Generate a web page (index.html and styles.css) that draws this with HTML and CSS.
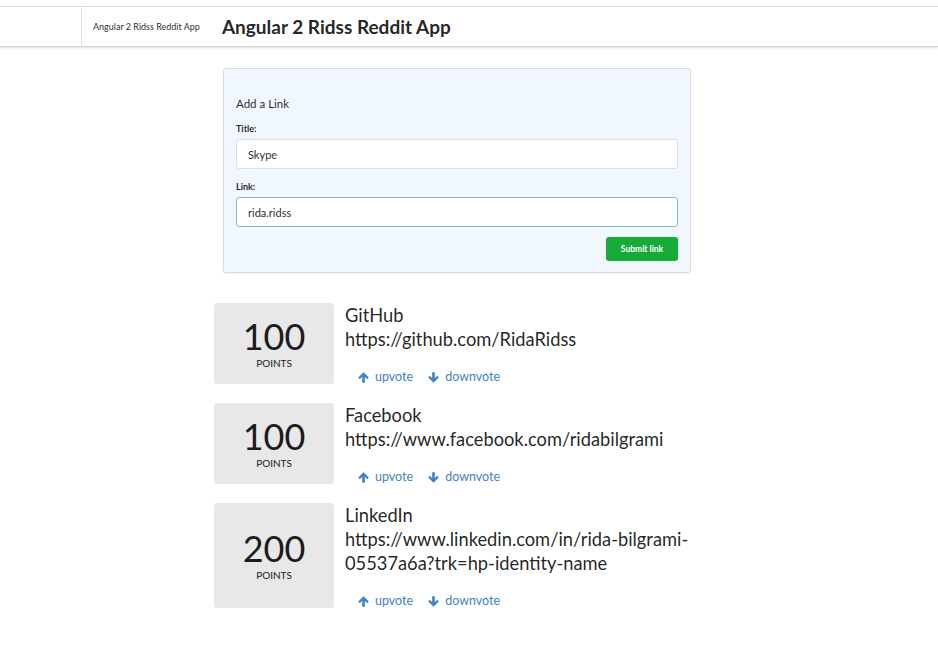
FILE: index.html
```html
<!DOCTYPE html>
<html>
<head>
<meta charset="utf-8">
<link rel="stylesheet" href="styles.css">
</head>
<body>
<div class="menu">
  <div class="menu-spacer"></div>
  <div class="menu-item">Angular 2 Ridss Reddit App</div>
  <h1 class="menu-title">Angular 2 Ridss Reddit App</h1>
</div>
<main class="main">
  <form class="link-form">
    <h3 class="form-heading">Add a Link</h3>
    <div class="field">
      <label class="field-label">Title:</label>
      <input class="field-input" type="text" value="Skype">
    </div>
    <div class="field">
      <label class="field-label">Link:</label>
      <input class="field-input focused" type="text" value="rida.ridss">
    </div>
    <div class="form-actions">
      <button class="submit-btn" type="button">Submit link</button>
    </div>
  </form>

  <div class="articles">
    <div class="article">
      <div class="score"><div class="score-value">100</div><div class="score-label">POINTS</div></div>
      <div class="article-body">
        <div class="article-title">GitHub</div>
        <div class="article-url">https://github.com/RidaRidss</div>
        <div class="votes">
          <a class="vote"><svg class="arrow" viewBox="0 0 10 10"><path d="M5 0.2 L9.8 5 L8.3 6.5 L6.2 4.4 L6.2 9.8 L3.8 9.8 L3.8 4.4 L1.7 6.5 L0.2 5 Z"/></svg>upvote</a>
          <a class="vote"><svg class="arrow" viewBox="0 0 10 10"><path d="M5 9.8 L9.8 5 L8.3 3.5 L6.2 5.6 L6.2 0.2 L3.8 0.2 L3.8 5.6 L1.7 3.5 L0.2 5 Z"/></svg>downvote</a>
        </div>
      </div>
    </div>
    <div class="article">
      <div class="score"><div class="score-value">100</div><div class="score-label">POINTS</div></div>
      <div class="article-body">
        <div class="article-title">Facebook</div>
        <div class="article-url">https://www.facebook.com/ridabilgrami</div>
        <div class="votes">
          <a class="vote"><svg class="arrow" viewBox="0 0 10 10"><path d="M5 0.2 L9.8 5 L8.3 6.5 L6.2 4.4 L6.2 9.8 L3.8 9.8 L3.8 4.4 L1.7 6.5 L0.2 5 Z"/></svg>upvote</a>
          <a class="vote"><svg class="arrow" viewBox="0 0 10 10"><path d="M5 9.8 L9.8 5 L8.3 3.5 L6.2 5.6 L6.2 0.2 L3.8 0.2 L3.8 5.6 L1.7 3.5 L0.2 5 Z"/></svg>downvote</a>
        </div>
      </div>
    </div>
    <div class="article">
      <div class="score"><div class="score-value">200</div><div class="score-label">POINTS</div></div>
      <div class="article-body">
        <div class="article-title">LinkedIn</div>
        <div class="article-url">https://www.linkedin.com/in/rida-bilgrami-05537a6a?trk=hp-identity-name</div>
        <div class="votes">
          <a class="vote"><svg class="arrow" viewBox="0 0 10 10"><path d="M5 0.2 L9.8 5 L8.3 6.5 L6.2 4.4 L6.2 9.8 L3.8 9.8 L3.8 4.4 L1.7 6.5 L0.2 5 Z"/></svg>upvote</a>
          <a class="vote"><svg class="arrow" viewBox="0 0 10 10"><path d="M5 9.8 L9.8 5 L8.3 3.5 L6.2 5.6 L6.2 0.2 L3.8 0.2 L3.8 5.6 L1.7 3.5 L0.2 5 Z"/></svg>downvote</a>
        </div>
      </div>
    </div>
  </div>
</main>
</body>
</html>
```
FILE: styles.css
```css
* { box-sizing: border-box; }
html, body { margin: 0; padding: 0; background: #fff; }
body {
  font-family: Lato, "Helvetica Neue", Arial, sans-serif;
  color: rgba(0,0,0,0.87);
  padding-top: 6px;
}
.menu {
  display: flex;
  align-items: center;
  height: 41px;
  border-top: 1px solid #dcdcdc;
  border-bottom: 1px solid #d4d4d5;
  box-shadow: 0 1px 2px rgba(34,36,38,0.15);
}
.menu-spacer {
  width: 82px;
  align-self: stretch;
  border-right: 1px solid #e2e2e3;
}
.menu-item {
  font-size: 9px;
  padding: 0 22px 0 11px;
  color: rgba(0,0,0,0.87);
}
.menu-title {
  margin: 0;
  font-size: 19px;
  font-weight: 700;
  color: rgba(0,0,0,0.87);
}
.main {
  padding-top: 21px;
}
.link-form {
  margin: 0 0 0 223px;
  width: 468px;
  background: #f0f7fe;
  border: 1px solid #d3dbe3;
  border-radius: 3px;
  box-shadow: 0 1px 2px rgba(0,0,0,0.06);
  padding: 28px 12px 11px 12px;
}
.form-heading {
  margin: 0 0 13px 0;
  font-size: 11.5px;
  font-weight: 400;
  color: rgba(0,0,0,0.87);
}
.field { margin-bottom: 12px; }
.field-label {
  display: block;
  font-size: 9px;
  font-weight: 700;
  margin-bottom: 5px;
  color: rgba(0,0,0,0.87);
}
.field-input {
  display: block;
  width: 100%;
  height: 30px;
  font-family: Lato, sans-serif;
  font-size: 11px;
  color: rgba(0,0,0,0.87);
  background: #fff;
  border: 1px solid #dedede;
  border-radius: 3px;
  padding: 0 11px;
  outline: none;
}
.field-input.focused { border-color: #85b7d9; }
.form-actions {
  display: flex;
  justify-content: flex-end;
  margin-top: -2px;
}
.submit-btn {
  background: #16ab39;
  color: #fff;
  border: none;
  border-radius: 3px;
  width: 72px;
  height: 24px;
  font-family: Lato, sans-serif;
  font-size: 8.5px;
  font-weight: 700;
}
.articles {
  margin: 30px 0 0 214px;
  display: flex;
  flex-direction: column;
  gap: 19px;
}
.article {
  display: flex;
  align-items: stretch;
}
.score {
  width: 120px;
  flex: none;
  background: #e8e8e8;
  border-radius: 3px;
  display: flex;
  flex-direction: column;
  align-items: center;
  justify-content: center;
  min-height: 81px;
}
.score-value {
  font-size: 36px;
  line-height: 36px;
  color: #1b1c1d;
}
.score-label {
  font-size: 10px;
  line-height: 12px;
  margin-top: 3px;
  color: #1b1c1d;
}
.article-body {
  padding-left: 11px;
  width: 370px;
}
.article-title, .article-url {
  font-size: 18.3px;
  line-height: 24px;
  color: rgba(0,0,0,0.87);
}
.votes {
  display: flex;
  gap: 15px;
  padding-left: 13px;
  margin-top: 19px;
}
.vote {
  color: #4183c4;
  font-size: 12.5px;
  line-height: 14px;
  display: flex;
  align-items: center;
  gap: 6px;
}
.arrow { width: 11px; height: 11px; fill: #4183c4; }
```
